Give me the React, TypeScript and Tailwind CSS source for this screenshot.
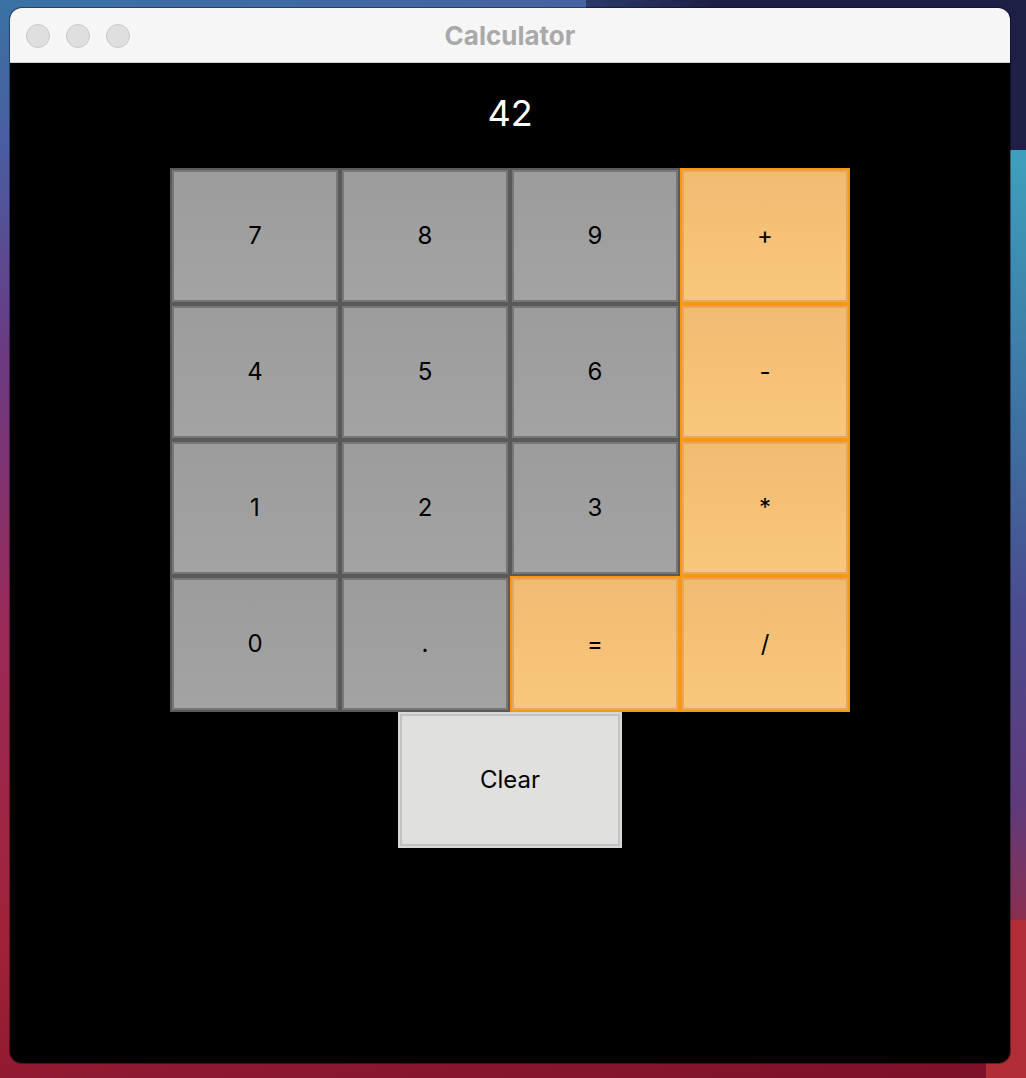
import React from "react";

const rows = [
  ["7", "8", "9", "+"],
  ["4", "5", "6", "-"],
  ["1", "2", "3", "*"],
  ["0", ".", "=", "/"],
];

const ops = ["+", "-", "*", "/", "="];

export default function App() {
  return (
    <div className="relative h-[1078px] w-[1026px] overflow-hidden bg-[linear-gradient(170deg,#3a72a4_0%,#4a5ca0_12%,#6a3a82_28%,#9a2a58_50%,#a02238_75%,#7a1028_100%)] font-['Inter',sans-serif]">
      <div className="absolute right-0 top-0 h-[8px] w-[440px] bg-[linear-gradient(90deg,#2a3a6a,#1d1f45_30%)]" />
      <div className="absolute right-0 top-0 h-[150px] w-[40px] bg-[#1d1f45]" />
      <div className="absolute right-0 top-[150px] h-[770px] w-[40px] bg-[linear-gradient(180deg,#3ea0bd_0%,#3d72a0_35%,#4a4b8e_60%,#5e3a7a_85%,#8a3050_100%)]" />
      <div className="absolute bottom-0 right-0 h-[158px] w-[40px] bg-[#b02d36]" />
      <div className="relative mx-[10px] mt-[8px] flex h-[1055px] w-[1000px] flex-col overflow-hidden rounded-[12px] bg-black shadow-[0_0_0_1px_rgba(0,0,0,0.4)]">
        <div className="relative flex h-[55px] shrink-0 items-center justify-center border-b border-[#d2d2d2] bg-[#f6f6f6]">
          <div className="absolute left-[16px] top-[16px] flex gap-[16px]">
            <span className="h-[24px] w-[24px] rounded-full border border-[#c9c9c9] bg-[#dfdfdf]" />
            <span className="h-[24px] w-[24px] rounded-full border border-[#c9c9c9] bg-[#dfdfdf]" />
            <span className="h-[24px] w-[24px] rounded-full border border-[#c9c9c9] bg-[#dfdfdf]" />
          </div>
          <span className="text-[26px] font-bold text-[#a9a9a9]">Calculator</span>
        </div>
        <div className="flex flex-col items-center pt-[30px]">
          <div className="h-[40px] text-[36px] leading-[40px] text-white">42</div>
          <div className="mt-[35px] grid grid-cols-[repeat(4,170px)] grid-rows-[repeat(4,136px)]">
            {rows.flat().map((k) => (
              <Key key={k} label={k} op={ops.includes(k)} />
            ))}
          </div>
          <button className="flex h-[136px] w-[224px] items-center justify-center border-2 border-[#d9d9d9] bg-[#e0e0de] text-[24px] text-black shadow-[inset_0_0_0_2px_#c2c2c2]">
            Clear
          </button>
        </div>
      </div>
    </div>
  );
}

function Key({ label, op }: { label: string; op: boolean }) {
  return (
    <button
      className={
        op
          ? "flex items-center justify-center border-2 border-[#f7980f] bg-[linear-gradient(180deg,#f0bb72,#f9c77c)] text-[24px] text-black shadow-[inset_0_0_0_2px_#e2a862]"
          : "flex items-center justify-center border-2 border-[#595959] bg-[linear-gradient(180deg,#9c9c9c,#a3a3a3)] text-[24px] text-black shadow-[inset_0_0_0_2px_#777777]"
      }
    >
      {label}
    </button>
  );
}
